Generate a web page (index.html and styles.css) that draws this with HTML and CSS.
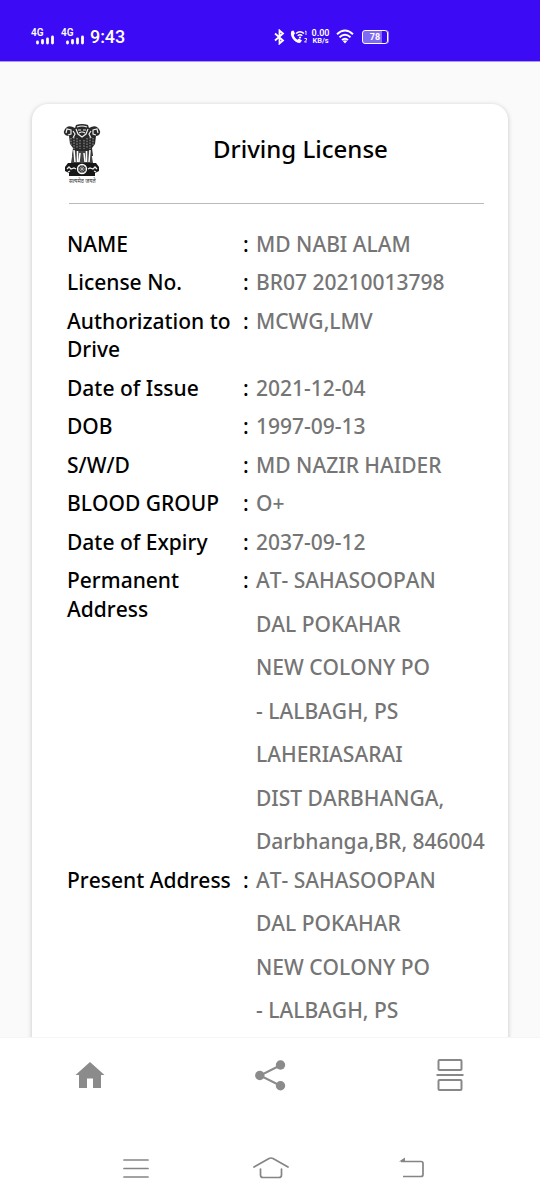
FILE: index.html
```html
<!DOCTYPE html>
<html lang="en">
<head>
<meta charset="utf-8">
<title>Driving License</title>
<link rel="stylesheet" href="styles.css">
</head>
<body>
<div class="screen">
  <header class="status">
    <div class="status-left">
      <div class="signal"><span>4G</span><svg width="19" height="10" viewBox="0 0 19 10"><path d="M1.5 7v1M6.5 5.500v2.500M11.500 4v4M16.500 2v6" stroke="#fff" stroke-width="2.800" stroke-linecap="round"/></svg></div>
      <div class="signal"><span>4G</span><svg width="19" height="10" viewBox="0 0 19 10"><path d="M1.5 7v1M6.5 5.500v2.500M11.500 4v4M16.500 2v6" stroke="#fff" stroke-width="2.800" stroke-linecap="round"/></svg></div>
      <time class="clock">9:43</time>
    </div>
    <div class="status-right">
      <svg width="11" height="16" viewBox="0 0 11 16"><path d="M1 4.500 9 11.500 5.500 14.500V1.500L9 4.500 1 11.500" fill="none" stroke="#fff" stroke-width="1.800"/></svg>
      <svg class="call" width="20" height="16" viewBox="0 0 20 16"><path d="M2.500 2C0 6 5 14 11 14l2-2.500-3-2-1.500 1.200C6.500 9.500 5 7.500 4.800 6L6 4.500 4.500 1.500Z" fill="#fff"/><path d="M7 4.500q4-3.500 8 0M8.700 6.800q2.300-2 4.600 0" fill="none" stroke="#fff" stroke-width="1.500"/><circle cx="11" cy="8.500" r="1.100" fill="#fff"/><path d="M16 2.500 17 2v4M15.500 9.500h2v1.500l-2 2h2.300" fill="none" stroke="#fff" stroke-width=".9"/></svg>
      <div class="speed"><span>0.00</span><span>KB/s</span></div>
      <svg class="wifi" width="18" height="15" viewBox="0 0 18 15"><path d="M1 5.200q8-7.200 16 0M3.500 8.300q5.500-5 11 0M6 11q3-2.700 6 0" fill="none" stroke="#fff" stroke-width="1.900"/><path d="m6.800 12 2.200 2.500 2.200-2.500q-2.200-1.500-4.400 0Z" fill="#fff"/></svg>
      <div class="battery"><span>78</span></div>
    </div>
  </header>
  <main class="content">
    <section class="card">
      <div class="card-head">
        <div class="emblem">
          <svg width="38" height="53" viewBox="0 0 38 53">
            <path d="M13 1q6-2 12 0l1 3q5-3 8-1 4 3 3 6-1 3-4 3l-1 8-3 4 1 8H9l1-8-3-4-1-8Q2 12 1 9 0 6 4 3q3-2 8 1Z" fill="#292929"/>
            <path d="M14 3q5-2 10 0M13 5l2 5 4 3 4-3 2-5M15 6h3m2 0h3M16 9q3-2 6 0M3 9l1-4 4 1v4l-3 1M35 9l-1-4-4 1v4l3 1M10 7l2 3-2 4M28 7l-2 3 2 4" fill="none" stroke="#eee" stroke-width="1.200"/>
            <path d="M8 14v7M11 13v12M14 14v10M17 16v9M21 16v9M24 14v10M27 13v12M30 14v7" stroke="#aaa" stroke-width=".9" stroke-dasharray="1.500 1.200"/>
            <path d="M10 27h18l2 12H8Z" fill="#444"/>
            <path d="m11 26 1 12M14.500 27v11M17 29l-1 9M21 29l1 9M23.500 27v11M27 26l-1 12" stroke="#fff" stroke-width="1.500"/>
            <path d="M5 39h28l3 4v4l-4 2v3H6v-3l-4-2v-4Z" fill="#171717"/>
            <circle cx="19" cy="45" r="4.500" fill="#333" stroke="#fff" stroke-width="1.300"/>
            <path d="M19 41v8M15 45h8M16.200 42.200l5.600 5.600M21.800 42.200l-5.600 5.600" stroke="#ccc" stroke-width=".6"/>
            <path d="m4 45 2-2 2 2 3-1 2 1M34 45l-2-2-2 2-3-1-2 1M5 48l2-1M33 48l-2-1" fill="none" stroke="#eee" stroke-width="1.300"/>
          </svg>
          <span class="motto">सत्यमेव जयते</span>
        </div>
        <h1 class="title">Driving License</h1>
      </div>
      <dl class="details">
        <div class="row"><dt>NAME</dt><i>:</i><dd>MD NABI ALAM</dd></div>
        <div class="row"><dt>License No.</dt><i>:</i><dd>BR07 20210013798</dd></div>
        <div class="row"><dt>Authorization to<br>Drive</dt><i>:</i><dd>MCWG,LMV</dd></div>
        <div class="row"><dt>Date of Issue</dt><i>:</i><dd>2021-12-04</dd></div>
        <div class="row"><dt>DOB</dt><i>:</i><dd>1997-09-13</dd></div>
        <div class="row"><dt>S/W/D</dt><i>:</i><dd>MD NAZIR HAIDER</dd></div>
        <div class="row"><dt>BLOOD GROUP</dt><i>:</i><dd>O+</dd></div>
        <div class="row"><dt>Date of Expiry</dt><i>:</i><dd>2037-09-12</dd></div>
        <div class="row"><dt>Permanent<br>Address</dt><i>:</i><dd><span>AT- SAHASOOPAN</span><span>DAL POKAHAR</span><span>NEW COLONY PO</span><span>- LALBAGH, PS</span><span>LAHERIASARAI</span><span>DIST DARBHANGA,</span><span>Darbhanga,BR, 846004</span></dd></div>
        <div class="row"><dt>Present Address</dt><i>:</i><dd><span>AT- SAHASOOPAN</span><span>DAL POKAHAR</span><span>NEW COLONY PO</span><span>- LALBAGH, PS</span></dd></div>
      </dl>
    </section>
  </main>
  <nav class="tabs">
    <svg width="30" height="34" viewBox="0 0 30 34"><path d="M15 4 29.500 17H26v13h-8V20.500h-6V30H4V17H.500Z" fill="#8b8b8b"/></svg>
    <svg width="32" height="34" viewBox="0 0 32 34"><path d="M26 7 5 17.500 26 28" fill="none" stroke="#8b8b8b" stroke-width="2"/><g fill="#8b8b8b"><circle cx="25.500" cy="7" r="4.700"/><circle cx="4.800" cy="17.500" r="4.700"/><circle cx="25.500" cy="27.800" r="4.700"/></g></svg>
    <svg width="28" height="34" viewBox="0 0 28 34"><g fill="none" stroke="#888" stroke-width="2"><rect x="2.500" y="2" width="23" height="10" rx="1"/><path d="M.500 17h27"/><rect x="2.500" y="22" width="23" height="10" rx="1"/></g></svg>
  </nav>
  <nav class="system">
    <svg width="26" height="24" viewBox="0 0 26 24"><path d="M1 4h24M1 12.500h24M1 21h24" stroke="#858585" stroke-width="1.700" stroke-linecap="round"/></svg>
    <svg width="36" height="24" viewBox="0 0 36 24"><path d="m1 11 15-8.500q2-1 4 0L35 11M7.500 13v6q0 2.500 2.500 2.500h16q2.500 0 2.500-2.500v-6" fill="none" stroke="#858585" stroke-width="1.700" stroke-linecap="round"/></svg>
    <svg width="26" height="24" viewBox="0 0 26 24"><path d="M2 5.500h20q2 0 2 2v11q0 2-2 2H4" fill="none" stroke="#858585" stroke-width="1.700"/><path d="m0 5.500 6-4v4Z" fill="#858585"/></svg>
  </nav>
</div>
</body>
</html>
```
FILE: styles.css
```css
* { box-sizing: border-box; }
body { margin: 0; background: #fff; font-family: "Noto Sans", sans-serif; }
svg { display: block; flex: none; }
.screen { display: flex; flex-direction: column; width: 540px; height: 1200px; overflow: hidden; }
.status { display: flex; flex: none; height: 62px; padding: 27px 0 0 31px; color: #fff; background: #3d0af6; border-bottom: 1px solid #a69bf5; font-family: Roboto, sans-serif; }
.status-left { display: flex; width: 243px; }
.signal { width: 30px; }
.signal span { display: block; height: 8px; font-size: 10px; line-height: 11px; font-weight: 600; }
.signal svg { margin-left: 5px; }
.clock { font-size: 18px; line-height: 20px; font-weight: 500; margin-left: -1px; letter-spacing: -.1px; }
.status-right { display: flex; align-items: center; height: 19px; }
.call { margin-left: 4px; }
.speed { width: 19px; margin-left: 2px; display: flex; flex-direction: column; align-items: center; font-size: 9px; line-height: 8px; font-weight: 600; }
.speed span:last-child { font-size: 7.500px; }
.wifi { margin-left: 6px; }
.battery { width: 26px; height: 14px; margin-left: 8px; border: 1px solid #fff; border-radius: 3px; background: linear-gradient(90deg, #8069f5 78%, #3d0af6 78%); text-align: center; font-size: 9px; line-height: 12px; font-weight: 700; box-shadow: 1px 0 0 -0.200px #b4a8ff; }
.content { flex: none; height: 976px; padding: 42px 32px 0; background: #fafafa; overflow: hidden; border-bottom: 1px solid #f6f6f6; }
.card { height: 1050px; padding: 0 24px 0 35px; border-radius: 16px; background: #fff; box-shadow: 0 1px 5px rgba(0,0,0,.22); }
.card-head { display: flex; height: 100px; border-bottom: 1px solid #bbb; margin-left: 2px; }
.emblem { width: 38px; margin: 20px 0 0 -6px; }
.motto { display: block; height: 8px; margin-left: 6px; color: #333; font-size: 5.500px; line-height: 8px; white-space: nowrap; }
.title { margin: 28px 0 0 112px; font-size: 24px; line-height: 33px; font-weight: 500; white-space: nowrap; }
.details { display: flex; flex-direction: column; gap: 10px; margin: 25.700px 0 0; font-size: 21px; line-height: 28.500px; font-kerning: none; white-space: nowrap; }
.row { display: grid; grid-template-columns: 176px 13px 1fr; font-weight: 500; }
.row i { font-style: normal; }
.row dd { margin: 0; display: flex; flex-direction: column; gap: 15px; color: #757575; }
.tabs { display: flex; flex: none; justify-content: space-between; height: 100px; padding: 20px 76px 0 75px; }
.system { display: flex; justify-content: space-between; padding: 18px 115px 0 123px; }
.system svg:nth-child(2) { margin: 0 3px 0 -3px; }
```
